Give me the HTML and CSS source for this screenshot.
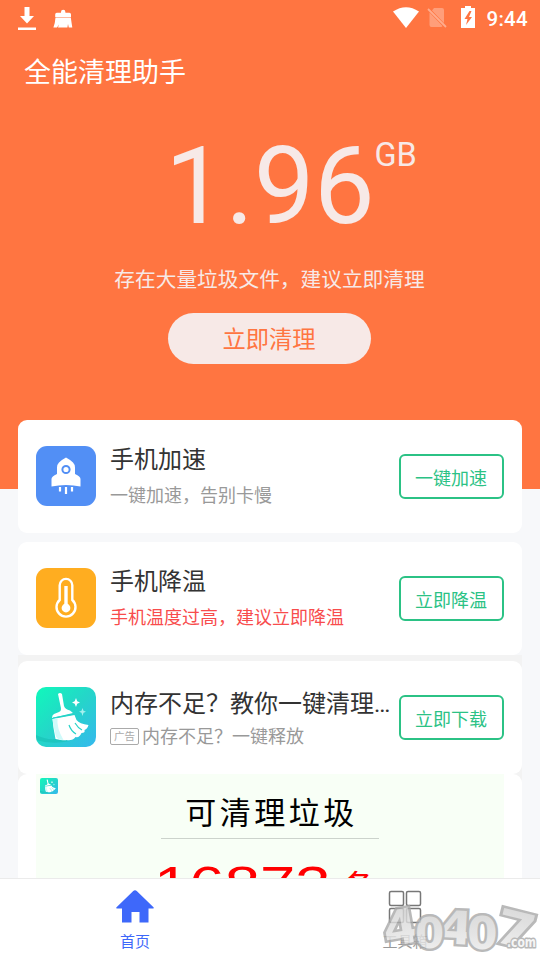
FILE: index.html
```html
<!DOCTYPE html>
<html lang="zh-CN">
<head>
<meta charset="utf-8">
<title>全能清理助手</title>
<link rel="stylesheet" href="styles.css">
</head>
<body>
<svg class="defs" width="0" height="0" aria-hidden="true">
  <defs>
    <linearGradient id="teal" x1="0" y1="0" x2="1" y2="1">
      <stop offset="0" stop-color="#10f9bb"/><stop offset=".5" stop-color="#25d5c9"/><stop offset="1" stop-color="#35b8ee"/>
    </linearGradient>
    <symbol id="broom" viewBox="0 0 60 60">
      <rect width="60" height="60" fill="url(#teal)"/>
      <path d="M0 48q10 5 20 4l14 2q-18 4-34-1z" fill="#18bfb4" opacity=".6"/>
      <path d="M22 7q2-2 4 0l2 12q1 3 6 4.500l3 2.500-21 5q0-3 2-4l5-2q3-1 1.500-6z" fill="#fff"/>
      <path d="M16.500 32l22-4 2 5q3 4 12 5-1 4-4 5 1 3-3 3-2 5-6 4-3 4-9 3-2 1-11-1l-2-11z" fill="#fff"/>
      <path d="M16.500 32l5-1q-1 10 6 22-7 0-8-5-2-8-3-16z" fill="#cffafa"/>
      <path d="M17 31l21.500-4M33 38q2 6 7 9M39 36q3 5 7 7" fill="none" stroke="#28d3c9" stroke-width="1.200"/>
      <path d="M40 11l1.200 3.300 2.800 1.200-2.800 1.300L40 20l-1.300-3.200-2.700-1.300 2.700-1.200z" fill="#fff"/>
      <path d="M46.500 21l1 2.800 2.500 1-2.500 1-1 3.200-1-3.200-2.500-1 2.500-1z" fill="#a6f0ee"/>
    </symbol>
  </defs>
</svg>
<div class="phone">
  <main class="content">
    <header class="hero">
      <div class="status">
        <div class="status-left">
          <svg width="18" height="24" viewBox="0 0 18 24"><path d="M6.500 1h5v9H16l-7 7.500L2 10h4.500zM0 21.500h18V24H0z" fill="#fff"/></svg>
          <svg class="brush" width="20" height="20" viewBox="0 0 20 20"><path d="M8 3q0-2.200 2.200-2.200T12.400 3v.8h4q1.600 0 1.600 1.600V8H2.200V5.400q0-1.600 1.600-1.600H8zM2.500 8.600h15.300q.7 5 1.500 9.900h-3.500l-.8-3.500-.6 3.500H5l1-3-2 3H.4Q2 15 2.500 8.600z" fill="#fff"/></svg>
        </div>
        <div class="status-right">
          <svg width="26" height="21" viewBox="0 0 26 21"><path d="M0 4.500Q13-4 26 4.500L13 21z" fill="#fff"/></svg>
          <svg class="sim" width="20" height="21" viewBox="0 0 20 21"><path d="M7 1h8q2 0 2 2v13L5 3.500zM2.500 5.500L15.500 19q-.4 1-1.500 1H4.500q-2 0-2-2z" fill="#fff" opacity=".3"/><path d="M1 2l18 18" stroke="#fff" stroke-width="1.800" opacity=".4"/></svg>
          <svg class="battery" width="14" height="22" viewBox="0 0 14 22"><path d="M4 0h6v2h4v20H0V2h4z" fill="#fff"/><path d="M8.500 5L3.500 13h3l-1.500 6 6-8H8l2.500-6z" fill="#ff7541"/></svg>
          <span class="time">9:44</span>
        </div>
      </div>
      <h1 class="title">全能清理助手</h1>
      <div class="amount"><span class="number">1.96</span><span class="unit">GB</span></div>
      <p class="notice">存在大量垃圾文件，建议立即清理</p>
      <button class="clean">立即清理</button>
    </header>
    <section class="cards">
      <article class="card">
        <svg class="icon" viewBox="0 0 60 60"><rect width="60" height="60" rx="11" fill="#528ff5"/><path d="M30 11.500q3 1.500 7 5 2 2 2 5V28q5.500 2.500 5.500 5v7.500q-7-1.500-14.500-1.500t-14.500 1.500V33q0-2.500 5.500-5v-6.500q0-3 2-5 4-3.500 7-5z" fill="#fff"/><circle cx="30" cy="23.500" r="3.600" fill="#fff" stroke="#528ff5" stroke-width="2"/><path d="M24 41v4.500M30 41v7M36 41v4.500" stroke="#fff" stroke-width="2.200"/></svg>
        <div class="copy"><h2>手机加速</h2><p>一键加速，告别卡慢</p></div>
        <button class="action">一键加速</button>
      </article>
      <article class="card">
        <svg class="icon" viewBox="0 0 60 60"><rect width="60" height="60" rx="11" fill="#ffad20"/><path d="M23.700 17.200a6.300 6.300 0 0 1 12.600 0V32a9.500 9.500 0 1 1-12.600 0z" fill="none" stroke="#fff" stroke-width="2.400"/><path d="M30 18v22" stroke="#fff" stroke-width="3.400"/><circle cx="30" cy="40" r="4.400" fill="#fff"/></svg>
        <div class="copy"><h2>手机降温</h2><p class="hot">手机温度过高，建议立即降温</p></div>
        <button class="action">立即降温</button>
      </article>
      <div class="ads">
        <article class="card ad">
          <svg class="icon rounded"><use href="#broom"/></svg>
          <div class="copy"><h2>内存不足？教你一键清理<span class="dots">...</span></h2><p><span class="tag">广告</span>内存不足？一键释放</p></div>
          <button class="action">立即下载</button>
        </article>
        <article class="banner-card">
          <div class="banner">
            <svg class="mini" viewBox="0 0 60 60" preserveAspectRatio="none"><use href="#broom"/></svg>
            <div class="banner-title">可清理垃圾</div>
            <div class="junk"><span class="count">16873</span><span class="measure">条</span></div>
          </div>
        </article>
      </div>
    </section>
  </main>
  <nav class="tabs">
    <a class="tab active">
      <svg width="38" height="34" viewBox="0 0 38 34"><path d="M17 1.200q2-1.800 4 0l16.500 16q.8 1.300-1 1.300H32.500V32.500H23.500V22h-8v10.500H6V18.500H1.500q-1.800 0-1-1.300z" fill="#3e68fa"/></svg>
      <span>首页</span>
    </a>
    <a class="tab">
      <svg width="34" height="34" viewBox="0 0 34 34"><g fill="none" stroke="#777" stroke-width="1.500"><rect x="1.500" y="1.500" width="14" height="14" rx="1.500"/><rect x="18.500" y="1.500" width="14" height="14" rx="1.500"/><rect x="1.500" y="18.500" width="14" height="14" rx="1.500"/><rect x="18.500" y="18.500" width="14" height="14" rx="1.500"/></g></svg>
      <span>工具箱</span>
    </a>
  </nav>
  <svg class="watermark" width="162" height="62" viewBox="0 0 162 62">
    <defs><linearGradient id="silver" x1="0" y1="0" x2="0" y2="1"><stop offset="0" stop-color="#cfcfcf"/><stop offset="1" stop-color="#efefef"/></linearGradient></defs>
    <g class="wm-big">
      <text transform="translate(8 49) rotate(-10) scale(1.080 1)" font-size="48">4</text>
      <text transform="translate(60 45) rotate(3) scale(1.080 1)" font-size="46">4</text>
      <text transform="translate(114 43) rotate(14) scale(1.200 1)" font-size="48">7</text>
      <text transform="translate(37 50)" font-size="42">0</text>
      <text transform="translate(89 51)" font-size="44">0</text>
    </g>
    <text class="wm-small" x="129" y="49" font-size="14" textLength="29" lengthAdjust="spacingAndGlyphs">.com</text>
  </svg>
</div>
</body>
</html>
```
FILE: styles.css
```css
* { box-sizing: border-box; }
body, h1, h2, p { margin: 0; font-weight: 400; }
body { font-family: Roboto, "Noto Sans CJK SC", sans-serif; background: #f7f8fa; }
button { font: inherit; padding: 0; }
.defs { position: absolute; }
.phone { position: relative; width: 540px; height: 960px; overflow: hidden; display: flex; flex-direction: column; }
.content { height: 878px; overflow: hidden; }
.hero { height: 489px; background: #ff7541; color: #f7e9e7; display: flex; flex-direction: column; align-items: center; }
.status { width: 100%; height: 36px; padding: 6px 12px 0 18px; display: flex; justify-content: space-between; }
.status-left, .status-right { display: flex; align-items: flex-start; }
.brush { margin: 3px 0 0 17px; }
.status-right > svg:first-child { margin-top: 1px; }
.sim { margin: 1px 0 0 8px; }
.battery { margin-left: 14px; }
.time { margin-left: 11px; color: #fff; font-size: 20.500px; font-weight: 500; line-height: 26px; letter-spacing: .3px; }
.title { align-self: flex-start; margin-left: 24px; height: 74px; line-height: 74px; font-size: 27px; color: #fff; }
.amount { display: flex; align-items: flex-start; height: 150px; margin-left: 42px; }
.number { font-size: 108px; line-height: 153px; letter-spacing: -.3px; }
.unit { font-size: 32.500px; line-height: 38px; margin-top: 26px; }
.notice { height: 41px; line-height: 41px; font-size: 20.700px; margin-right: 1px; }
.clean { margin: 12px 1px 0 0; width: 203px; height: 51px; border: 0; border-radius: 26px; background: #f7e9e7; color: #ff7541; font-size: 23.300px; padding: 0 1px 2px 0; }
.cards { margin-top: -69px; padding: 0 18px; }
.card { height: 113px; margin-bottom: 9px; padding: 0 18px; display: flex; align-items: center; background: #fff; border-radius: 9px; }
.icon { width: 60px; height: 60px; flex: none; margin-bottom: 1px; }
.rounded { border-radius: 10px; }
.copy { flex: 1; min-width: 0; margin-left: 14px; padding-top: 3px; white-space: nowrap; }
.copy h2 { font-size: 24px; line-height: 36px; color: #333; }
.copy p { font-size: 18px; line-height: 36px; color: #999; }
.copy .hot { color: #f84c4c; }
.dots { letter-spacing: -1.200px; }
.action { width: 105px; height: 45px; flex: none; border: 2px solid #2bc285; border-radius: 6px; background: #fff; color: #2bc285; font-size: 18px; padding: 0 1px 0 0; }
.ads { margin-top: -9px; padding-top: 6px; background: #f3f3f3; }
.ad { margin-bottom: 0; }
.ad .copy p { display: flex; align-items: center; line-height: 30px; }
.tag { width: 29px; height: 17px; margin: -2px 3px 0 0; border: 1px solid #aaa; border-radius: 2px; color: #aaa; font-size: 10.500px; line-height: 15px; text-align: center; }
.banner-card { height: 150px; padding: 0 18px; background: #fff; border-radius: 9px; }
.banner { position: relative; height: 150px; background: #f8fff6; display: flex; flex-direction: column; align-items: center; }
.mini { position: absolute; left: 4px; top: 4px; width: 18px; height: 16px; border-radius: 2px; }
.banner-title { width: 218px; height: 65px; padding-top: 16px; padding-left: 3px; border-bottom: 1px solid #ccd3cc; text-align: center; color: #000; font-size: 31px; line-height: 48px; letter-spacing: 3.500px; white-space: nowrap; }
.junk { display: flex; align-items: flex-start; width: 218px; margin-top: 17px; color: #f00; white-space: nowrap; font-family: "Liberation Sans", "Noto Sans CJK SC", sans-serif; }
.count { width: 188px; margin-left: -7px; font-size: 50px; line-height: 58px; transform: scaleX(1.270); transform-origin: 0 0; }
.measure { font-size: 34px; line-height: 50px; margin-top: 7px; }
.tabs { height: 82px; border-top: 1px solid #ebebeb; background: #fff; display: flex; }
.tab { flex: 1; display: flex; flex-direction: column; align-items: center; padding-top: 11px; font-size: 15px; line-height: 22px; color: #999; }
.tab span { margin-top: 7px; }
.active { color: #3e68fa; }
.watermark { position: absolute; left: 378px; top: 898px; opacity: .82; }
.wm-big text { font-family: "DejaVu Sans", sans-serif; font-weight: 700; fill: url(#silver); stroke: #aaa; stroke-width: 5px; paint-order: stroke; stroke-linejoin: miter; }
.wm-small { font-family: "DejaVu Sans", sans-serif; font-weight: 700; fill: #f4f4f4; stroke: #aaa; stroke-width: 3px; paint-order: stroke; stroke-linejoin: round; }
```
